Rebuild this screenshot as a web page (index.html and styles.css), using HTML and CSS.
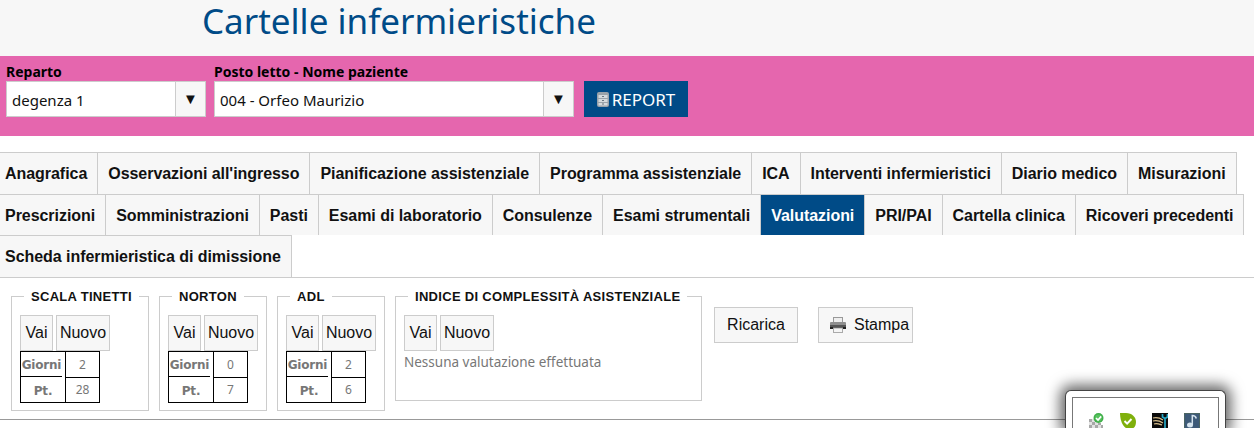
FILE: index.html
```html
<!DOCTYPE html>
<html lang="it">
<head>
  <meta charset="UTF-8">
  <title>Cartelle infermieristiche</title>
  <link rel="stylesheet" href="styles.css">
</head>
<body>
  <div class="header">
    <h1>Cartelle infermieristiche</h1>
  </div>

  <div class="filters">
    <div class="field field-reparto">
      <label>Reparto</label>
      <div class="select">
        <span class="select-value">degenza 1</span>
        <span class="select-arrow">&#9660;</span>
      </div>
    </div>
    <div class="field field-paziente">
      <label>Posto letto - Nome paziente</label>
      <div class="select">
        <span class="select-value">004 - Orfeo Maurizio</span>
        <span class="select-arrow">&#9660;</span>
      </div>
    </div>
    <button class="report-button">
      <svg class="report-icon" width="12" height="15" viewBox="0 0 12 15">
        <rect x="0" y="0" width="12" height="15" rx="2" fill="#9aa3aa"/>
        <rect x="1.5" y="3" width="9" height="3" fill="#d5dadd"/>
        <rect x="1.5" y="7" width="9" height="3" fill="#d5dadd"/>
        <rect x="1.5" y="11" width="9" height="2.5" fill="#d5dadd"/>
        <path d="M5 4.5h2M5 8.5h2M5 12h2" stroke="#68757f" stroke-width="1"/>
      </svg>REPORT
    </button>
  </div>

  <ul class="tabs">
    <li>Anagrafica</li>
    <li>Osservazioni all'ingresso</li>
    <li>Pianificazione assistenziale</li>
    <li>Programma assistenziale</li>
    <li>ICA</li>
    <li>Interventi infermieristici</li>
    <li>Diario medico</li>
    <li>Misurazioni</li>
    <li>Prescrizioni</li>
    <li>Somministrazioni</li>
    <li>Pasti</li>
    <li>Esami di laboratorio</li>
    <li>Consulenze</li>
    <li>Esami strumentali</li>
    <li class="active">Valutazioni</li>
    <li>PRI/PAI</li>
    <li>Cartella clinica</li>
    <li>Ricoveri precedenti</li>
    <li>Scheda infermieristica di dimissione</li>
  </ul>

  <div class="scales">
    <fieldset class="scale scale-tinetti">
      <legend>SCALA TINETTI</legend>
      <div class="scale-buttons"><button>Vai</button><button>Nuovo</button></div>
      <table class="scale-table">
        <tr><th><span>Giorni</span></th><td>2</td></tr>
        <tr><th>Pt.</th><td>28</td></tr>
      </table>
    </fieldset>
    <fieldset class="scale scale-norton">
      <legend>NORTON</legend>
      <div class="scale-buttons"><button>Vai</button><button>Nuovo</button></div>
      <table class="scale-table">
        <tr><th><span>Giorni</span></th><td>0</td></tr>
        <tr><th>Pt.</th><td>7</td></tr>
      </table>
    </fieldset>
    <fieldset class="scale scale-adl">
      <legend>ADL</legend>
      <div class="scale-buttons"><button>Vai</button><button>Nuovo</button></div>
      <table class="scale-table">
        <tr><th><span>Giorni</span></th><td>2</td></tr>
        <tr><th>Pt.</th><td>6</td></tr>
      </table>
    </fieldset>
    <fieldset class="scale scale-ica">
      <legend>INDICE DI COMPLESSITÀ ASISTENZIALE</legend>
      <div class="scale-buttons"><button>Vai</button><button>Nuovo</button></div>
      <p class="no-data">Nessuna valutazione effettuata</p>
    </fieldset>
    <button class="action-button reload">Ricarica</button>
    <button class="action-button print">
      <svg width="16" height="16" viewBox="0 0 16 16">
        <rect x="3.5" y="0.5" width="9" height="5" fill="#eee" stroke="#999"/>
        <rect x="0" y="5" width="16" height="7" rx="1" fill="#8f8f8f"/>
        <rect x="0" y="8" width="16" height="2" fill="#555"/>
        <rect x="0" y="10" width="16" height="2" fill="#222"/>
        <rect x="3.5" y="11" width="9" height="4.5" fill="#f5f5f5" stroke="#aaa"/>
      </svg>
      <span>Stampa</span>
    </button>
  </div>

  <hr class="divider">

  <div class="tray">
    <div class="tray-inner">
      <svg width="16" height="16" viewBox="0 0 16 16">
        <path d="M1 6h3v3H1zM7 6h2v3H7zM4 9h3v3H4zM10 10h3v2h-3zM1 12h3v3H1zM7 12h3v3H7zM13 12h2v3h-2z" fill="#a8a8a8"/>
        <path d="M4 6h3v3H4zM1 9h3v3H1zM7 9h3v3H7zM4 12h3v3H4zM10 12h3v3h-3z" fill="#e2e2e2"/>
        <circle cx="10.5" cy="5" r="5" fill="#3fae49"/>
        <circle cx="10.5" cy="5" r="3.4" fill="#58c25f"/>
        <path d="M8 5l2 2L13.2 3.4" fill="none" stroke="#fff" stroke-width="1.6"/>
      </svg>
      <svg width="16" height="16" viewBox="0 0 16 16">
        <path d="M0 0h6c6 0 10 4 10 9c0 4-2 7-6 7c-3 0-5-1-7-4C1 9 0 4 0 0z" fill="#7fb00c"/>
        <path d="M4.5 8l2.6 2.6L11.5 6" fill="none" stroke="#fff" stroke-width="2"/>
      </svg>
      <svg width="16" height="16" viewBox="0 0 16 16">
        <rect width="16" height="16" fill="#0b0b0b"/>
        <path d="M1 5c4-1 7 0 10 2M1 8c4-1 7 0 10 2M2 11c3-1 5 0 8 1" fill="none" stroke="#d8bf8c" stroke-width="1.2"/>
        <path d="M10.5 1v3l2.5 1.5L15.5 4V1M13 5v11" fill="none" stroke="#27a6c4" stroke-width="1.7"/>
      </svg>
      <svg width="16" height="16" viewBox="0 0 16 16">
        <rect width="16" height="16" fill="#4a6463"/>
        <rect x="1" y="1" width="14" height="14" fill="#3d5a78"/>
        <ellipse cx="6" cy="12" rx="3" ry="2.5" fill="#d6e4ee"/>
        <path d="M8.3 12V2.5c2 0 3.5 1 4 3" fill="none" stroke="#d6e4ee" stroke-width="1.5"/>
      </svg>
    </div>
  </div>
</body>
</html>
```
FILE: styles.css
```css
html, body {
  margin: 0;
  height: 428px;
  overflow: hidden;
  background-color: #fff;
}
body {
  position: relative;
  font-family: "Liberation Sans", Arial, sans-serif;
}

/* titolo */
.header {
  height: 56px;
  background-color: #f7f7f7;
  padding-left: 202px;
  box-sizing: border-box;
}
.header h1 {
  margin: 0;
  font-family: "Noto Sans", sans-serif;
  font-weight: 400;
  font-size: 35px;
  line-height: 42px;
  color: #004b87;
}

/* filtri */
.filters {
  height: 80px;
  box-sizing: border-box;
  background-color: #e566ae;
  padding: 6px 6px 0;
  display: flex;
  align-items: flex-start;
}
.field label {
  display: block;
  font-family: "Noto Sans", sans-serif;
  font-weight: 700;
  font-size: 14px;
  line-height: 19px;
  color: #000;
}
.field-reparto { width: 200px; margin-right: 8px; }
.field-paziente { width: 360px; margin-right: 10px; }
.select {
  height: 36px;
  box-sizing: border-box;
  border: 1px solid #ccc;
  background-color: #fff;
  display: flex;
  align-items: stretch;
}
.select-value {
  flex: 1;
  padding-left: 5px;
  font-family: "Noto Sans", sans-serif;
  font-size: 15px;
  line-height: 36px;
  color: #111;
}
.select-arrow {
  width: 29px;
  border-left: 1px solid #ccc;
  background-color: #f7f7f7;
  text-align: center;
  font-size: 15px;
  line-height: 33px;
  color: #111;
}
.report-button {
  margin-top: 19px;
  width: 104px;
  height: 36px;
  border: none;
  background-color: #004b87;
  color: #fff;
  font-family: "Noto Sans", sans-serif;
  font-size: 17px;
  padding: 0;
  display: flex;
  align-items: center;
  justify-content: center;
}
.report-icon { margin-right: 3px; }

/* schede */
.tabs {
  list-style: none;
  margin: 16px 0 0 -5px;
  padding: 0;
  display: flex;
  flex-wrap: wrap;
  width: 1259px;
  height: 125px;
  border-bottom: 1px solid #ccc;
}
.tabs li {
  height: 40.67px;
  padding: 0 10px;
  line-height: 41px;
  font-size: 16px;
  font-weight: 700;
  letter-spacing: -0.045px;
  color: #111;
  background-color: #f7f7f7;
  border-top: 1px solid #ccc;
  border-right: 1px solid #ccc;
}
.tabs li.active {
  background-color: #004b87;
  color: #fff;
}

/* scale */
.scales {
  display: flex;
  align-items: flex-start;
  padding: 11px 0 0 11px;
}
.scale {
  margin: 0 10px 0 0;
  padding: 11px 8px 8px;
  min-width: 0;
  box-sizing: border-box;
  border: 1px solid #ccc;
}
.scale legend {
  margin-left: 4px;
  padding: 0 7px;
  font-size: 13px;
  font-weight: 700;
  letter-spacing: 0.3px;
  line-height: 15px;
  color: #111;
}
.scale-tinetti { width: 138px; height: 122px; }
.scale-norton, .scale-adl { width: 108px; height: 122px; }
.scale-ica { width: 307px; height: 112px; margin-right: 12px; }
.scale-buttons {
  display: flex;
  gap: 3px;
}
.scale-buttons button, .action-button {
  height: 36px;
  padding: 0;
  border: 1px solid #ccc;
  background-color: #f7f7f7;
  font-family: "Liberation Sans", Arial, sans-serif;
  font-size: 16px;
  color: #111;
}
.scale-buttons button:first-child { width: 33px; }
.scale-buttons button:last-child { width: 54px; }
.scale-table {
  border-collapse: collapse;
  width: 80px;
  table-layout: fixed;
  border: 1px solid #000;
}
.scale-table tr { height: 25px; }
.scale-table th, .scale-table td {
  padding: 0;
  text-align: center;
  border: 1px solid #000;
  font-size: 12px;
  color: #777;
  font-weight: 400;
}
.scale-table th {
  width: 44px;
  padding-top: 3px;
  font-family: "DejaVu Sans", sans-serif;
  font-weight: 700;
  font-size: 12px;
  border-top: none;
  border-bottom: none;
  letter-spacing: -0.2px;
}
.scale-table th:has(span) { padding-top: 0; }
.scale-table th span {
  display: block;
  margin-right: 3px;
  padding-top: 2px;
  line-height: 22px;
  border-bottom: 1px solid #000;
}
.scale-table td {
  font-family: "Noto Sans", sans-serif;
}
.no-data {
  margin: 2px 0 0;
  font-family: "Noto Sans", sans-serif;
  font-size: 13.5px;
  color: #777;
}
.action-button {
  margin-top: 18px;
}
.reload { width: 84px; }
.print {
  margin-left: 20px;
  width: 95px;
  padding-left: 11px;
  display: flex;
  align-items: center;
  gap: 8px;
}
.print svg { flex-shrink: 0; }

.divider {
  margin: 8px 0 0;
  border: none;
  border-top: 1px solid #999;
}

/* finestra sovrapposta */
.tray {
  position: absolute;
  left: 1065px;
  top: 390px;
  width: 161px;
  height: 38px;
  box-sizing: border-box;
  padding: 6px 6px 0;
  background-color: #fff;
  border: 1px solid #444;
  border-bottom: none;
  border-radius: 6px 6px 0 0;
  box-shadow: 0 0 14px 5px rgba(0, 0, 0, 0.6);
}
.tray-inner {
  height: 31px;
  box-sizing: border-box;
  border: 1px solid #777;
  border-bottom: none;
  padding: 15px 0 0 15px;
  display: flex;
  gap: 16px;
  overflow: hidden;
}
.tray-inner svg { flex-shrink: 0; }
```
